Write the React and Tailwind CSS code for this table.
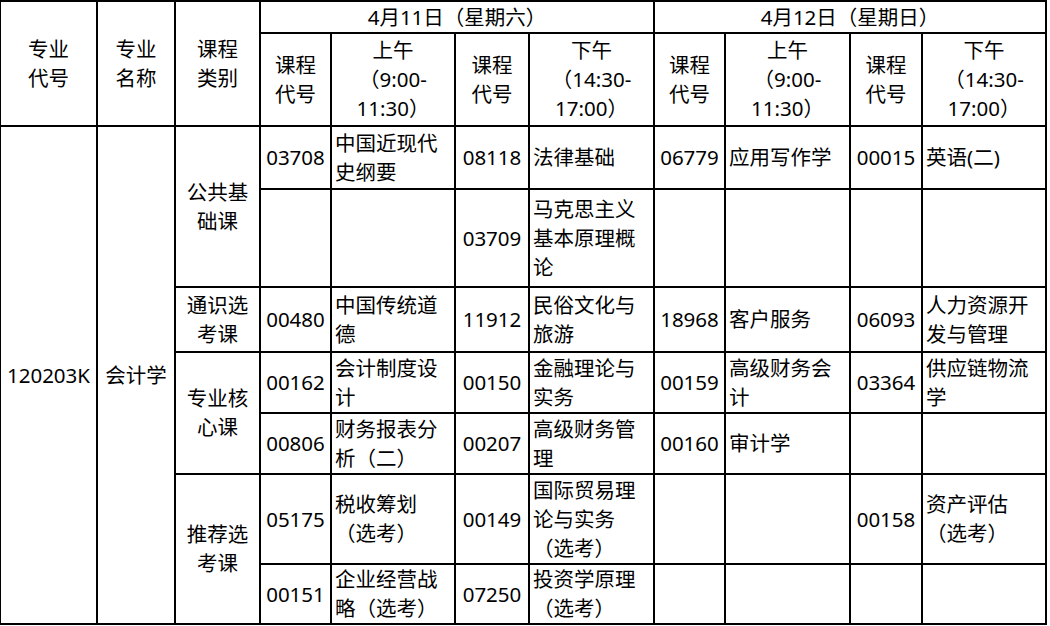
const rows = [
  {
    cat: { text: ["公共基", "础课"], span: 2 },
    cells: [
      ["03708", ["中国近现代", "史纲要"]],
      ["08118", ["法律基础"]],
      ["06779", ["应用写作学"]],
      ["00015", ["英语(二)"]],
    ],
    h: "h-[63px]",
  },
  {
    cells: [
      ["", []],
      ["03709", ["马克思主义", "基本原理概", "论"]],
      ["", []],
      ["", []],
    ],
    h: "h-[98px]",
  },
  {
    cat: { text: ["通识选", "考课"], span: 1 },
    cells: [
      ["00480", ["中国传统道", "德"]],
      ["11912", ["民俗文化与", "旅游"]],
      ["18968", ["客户服务"]],
      ["06093", ["人力资源开", "发与管理"]],
    ],
    h: "h-[65px]",
  },
  {
    cat: { text: ["专业核", "心课"], span: 2 },
    cells: [
      ["00162", ["会计制度设", "计"]],
      ["00150", ["金融理论与", "实务"]],
      ["00159", ["高级财务会", "计"]],
      ["03364", ["供应链物流", "学"]],
    ],
    h: "h-[61px]",
  },
  {
    cells: [
      ["00806", ["财务报表分", "析（二）"]],
      ["00207", ["高级财务管", "理"]],
      ["00160", ["审计学"]],
      ["", []],
    ],
    h: "h-[61px]",
  },
  {
    cat: { text: ["推荐选", "考课"], span: 2 },
    cells: [
      ["05175", ["税收筹划", "（选考）"]],
      ["00149", ["国际贸易理", "论与实务", "（选考）"]],
      ["", []],
      ["00158", ["资产评估", "（选考）"]],
    ],
    h: "h-[90px]",
  },
  {
    cells: [
      ["00151", ["企业经营战", "略（选考）"]],
      ["07250", ["投资学原理", "（选考）"]],
      ["", []],
      ["", []],
    ],
    h: "h-[60px]",
  },
];

const td = "border-2 border-black p-0 align-middle";

function Lines({ lines }) {
  return lines.map((l, i) => (
    <div key={i} className="whitespace-nowrap">
      {l}
    </div>
  ));
}

function DayHead() {
  return (
    <>
      <th className={`${td} font-normal text-center`}>
        <Lines lines={["课程", "代号"]} />
      </th>
      <th className={`${td} font-normal text-center`}>
        <Lines lines={["上午", "（9:00-", "11:30）"]} />
      </th>
      <th className={`${td} font-normal text-center`}>
        <Lines lines={["课程", "代号"]} />
      </th>
      <th className={`${td} font-normal text-center`}>
        <Lines lines={["下午", "（14:30-", "17:00）"]} />
      </th>
    </>
  );
}

export default function App() {
  return (
    <div
      className="w-[1050px] h-[626px] bg-white text-black overflow-hidden [text-spacing-trim:space-all]"
      style={{ fontFamily: '"Noto Sans", "Noto Sans CJK SC", sans-serif' }}
    >
      <table className="-ml-px border-collapse table-fixed w-[1048px] text-[20.5px] leading-[29px]">
        <colgroup>
          <col className="w-[97px]" />
          <col className="w-[78px]" />
          <col className="w-[85px]" />
          <col className="w-[71px]" />
          <col className="w-[124px]" />
          <col className="w-[74px]" />
          <col className="w-[125px]" />
          <col className="w-[71px]" />
          <col className="w-[125px]" />
          <col className="w-[72px]" />
          <col className="w-[124px]" />
        </colgroup>
        <thead>
          <tr className="h-[32px]">
            <th rowSpan={2} className={`${td} font-normal text-center`}>
              <Lines lines={["专业", "代号"]} />
            </th>
            <th rowSpan={2} className={`${td} font-normal text-center`}>
              <Lines lines={["专业", "名称"]} />
            </th>
            <th rowSpan={2} className={`${td} font-normal text-center`}>
              <Lines lines={["课程", "类别"]} />
            </th>
            <th colSpan={4} className={`${td} font-normal text-center`}>
              4月11日（星期六）
            </th>
            <th colSpan={4} className={`${td} font-normal text-center`}>
              4月12日（星期日）
            </th>
          </tr>
          <tr className="h-[93px]">
            <DayHead />
            <DayHead />
          </tr>
        </thead>
        <tbody>
          {rows.map((r, ri) => (
            <tr key={ri} className={r.h}>
              {ri === 0 && (
                <>
                  <td rowSpan={7} className={`${td} text-center`}>
                    120203K
                  </td>
                  <td rowSpan={7} className={`${td} text-center`}>
                    会计学
                  </td>
                </>
              )}
              {r.cat && (
                <td rowSpan={r.cat.span} className={`${td} text-center`}>
                  <Lines lines={r.cat.text} />
                </td>
              )}
              {r.cells.map(([code, name], ci) => [
                <td key={`c${ci}`} className={`${td} text-center`}>
                  {code}
                </td>,
                <td key={`n${ci}`} className={`${td} text-left pl-[3px]`}>
                  <Lines lines={name} />
                </td>,
              ])}
            </tr>
          ))}
        </tbody>
      </table>
    </div>
  );
}
